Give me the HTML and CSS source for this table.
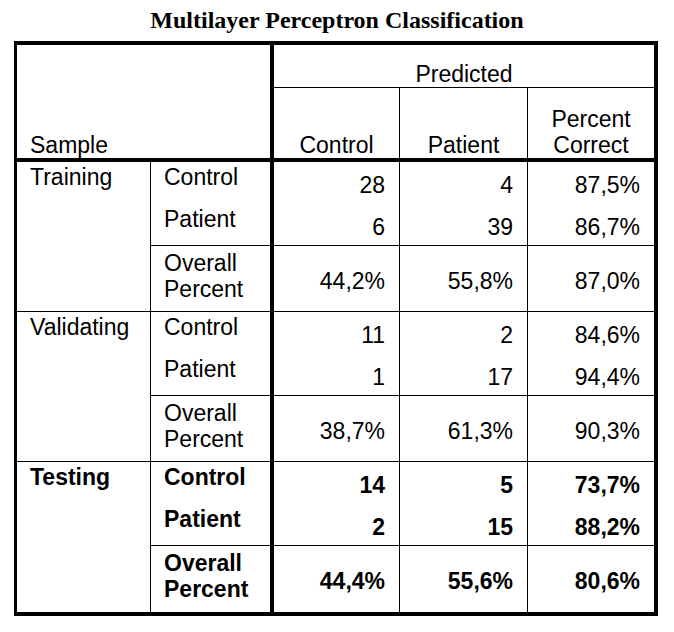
FILE: index.html
```html
<!DOCTYPE html>
<html lang="en">
<head>
<meta charset="utf-8">
<title>Multilayer Perceptron Classification</title>
<link rel="stylesheet" href="styles.css">
</head>
<body>
<h1 class="title">Multilayer Perceptron Classification</h1>
<table class="classif">
  <colgroup>
    <col class="c1"><col class="c2"><col class="c3"><col class="c4"><col class="c5">
  </colgroup>
  <thead>
    <tr class="h1">
      <th class="corner" rowspan="2" colspan="2">Sample</th>
      <th class="pred" colspan="3">Predicted</th>
    </tr>
    <tr class="h2">
      <th class="colhead">Control</th>
      <th class="colhead">Patient</th>
      <th class="colhead last">Percent<br>Correct</th>
    </tr>
  </thead>
  <tbody class="group">
    <tr class="r-first">
      <th class="sample" rowspan="3">Training</th>
      <th class="cat">Control</th>
      <td class="val">28</td><td class="val">4</td><td class="val last">87,5%</td>
    </tr>
    <tr class="r-mid">
      <th class="cat">Patient</th>
      <td class="val">6</td><td class="val">39</td><td class="val last">86,7%</td>
    </tr>
    <tr class="r-overall">
      <th class="cat">Overall<br>Percent</th>
      <td class="val">44,2%</td><td class="val">55,8%</td><td class="val last">87,0%</td>
    </tr>
  </tbody>
  <tbody class="group">
    <tr class="r-first">
      <th class="sample" rowspan="3">Validating</th>
      <th class="cat">Control</th>
      <td class="val">11</td><td class="val">2</td><td class="val last">84,6%</td>
    </tr>
    <tr class="r-mid">
      <th class="cat">Patient</th>
      <td class="val">1</td><td class="val">17</td><td class="val last">94,4%</td>
    </tr>
    <tr class="r-overall">
      <th class="cat">Overall<br>Percent</th>
      <td class="val">38,7%</td><td class="val">61,3%</td><td class="val last">90,3%</td>
    </tr>
  </tbody>
  <tbody class="group group-last bold">
    <tr class="r-first">
      <th class="sample" rowspan="3">Testing</th>
      <th class="cat">Control</th>
      <td class="val">14</td><td class="val">5</td><td class="val last">73,7%</td>
    </tr>
    <tr class="r-mid">
      <th class="cat">Patient</th>
      <td class="val">2</td><td class="val">15</td><td class="val last">88,2%</td>
    </tr>
    <tr class="r-overall">
      <th class="cat">Overall<br>Percent</th>
      <td class="val">44,4%</td><td class="val">55,6%</td><td class="val last">80,6%</td>
    </tr>
  </tbody>
</table>
</body>
</html>
```

FILE: styles.css
```css
html, body {
  margin: 0;
  padding: 0;
  background: #ffffff;
  color: #000000;
}

th, td {
  padding: 0;
  font-weight: normal;
  white-space: nowrap;
}

.title {
  margin: 0;
  height: 41px;
  line-height: 41px;
  font-family: "Liberation Serif", "Times New Roman", serif;
  font-weight: bold;
  font-size: 24px;
  text-align: center;
}

.classif {
  margin-left: 14px;
  width: 644px;
  table-layout: fixed;
  border-collapse: separate;
  border-spacing: 0;
  border-top: 4px solid #000;
  border-left: 3px solid #000;
  border-right: 4px solid #000;
  border-bottom: 4px solid #000;
  font-family: "Liberation Sans", Arial, sans-serif;
  font-size: 23px;
  line-height: 26px;
}

.c1 { width: 134px; }
.c2 { width: 123px; }
.c3 { width: 126px; }
.c4 { width: 128px; }
.c5 { width: 126px; }

.h1 { height: 43px; }
.h2 { height: 74px; }

.corner {
  text-align: left;
  vertical-align: bottom;
  padding: 0 0 0 13px;
  border-right: 4px solid #000;
  border-bottom: 4px solid #000;
}

.pred {
  text-align: center;
  vertical-align: bottom;
  border-bottom: 1px solid #000;
}

.colhead {
  text-align: center;
  vertical-align: bottom;
  border-right: 1px solid #000;
  border-bottom: 4px solid #000;
}

.colhead.last { border-right: 0; }

.r-first { height: 42px; }
.r-mid { height: 42px; }
.r-overall { height: 66px; }

.sample {
  text-align: left;
  vertical-align: top;
  padding: 2px 0 0 13px;
  border-right: 1px solid #000;
  border-bottom: 1px solid #000;
}

.cat {
  text-align: left;
  vertical-align: top;
  padding: 2px 0 0 13px;
  border-right: 4px solid #000;
}

.val {
  text-align: right;
  vertical-align: middle;
  padding: 4px 14px 0 0;
  border-right: 1px solid #000;
}

.val.last { border-right: 0; }

.r-overall .cat { padding-top: 4px; }

.r-mid .cat,
.r-mid .val,
.r-overall .cat,
.r-overall .val {
  border-bottom: 1px solid #000;
}

.group-last .sample,
.group-last .r-overall .cat,
.group-last .r-overall .val {
  border-bottom: 0;
}

.bold th,
.bold td {
  font-weight: bold;
}
```
